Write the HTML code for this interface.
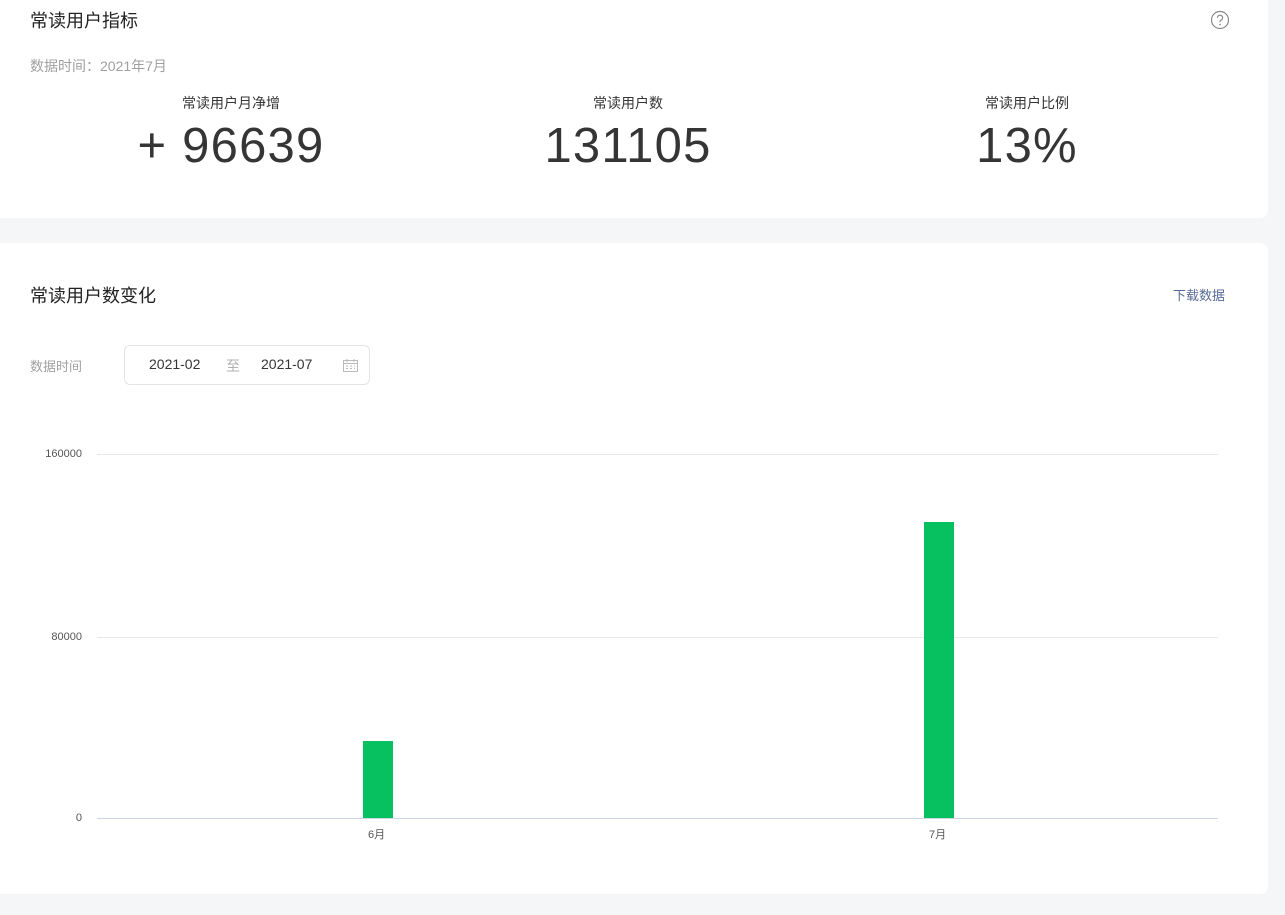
<!DOCTYPE html>
<html><head><meta charset="utf-8"><style>
*{margin:0;padding:0;box-sizing:border-box}
body{width:1285px;height:915px;background:#f5f6f7;font-family:"Liberation Sans","Noto Sans CJK SC",sans-serif;position:relative;overflow:hidden;color:#353535}
.card{position:absolute;left:0;width:1268px;background:#fff;border-radius:0 8px 8px 0}
.abs{position:absolute;white-space:nowrap}
.t{font-size:18px;color:#222}
.lbl{font-size:14px;color:#353535;text-align:center;width:300px}
.num{font-size:49px;color:#353535;text-align:center;width:300px;line-height:48px;letter-spacing:1.2px}
.g{position:absolute;left:97px;width:1121px;height:1px;background:#e7e8ec}
.yl{position:absolute;font-size:11px;color:#555;right:1203px;text-align:right}
</style></head><body>
<div class="card" style="top:-8px;height:226px">
  <div class="abs t" style="left:30px;top:15px">常读用户指标</div>
  <svg class="abs" style="left:1210px;top:18px" width="20" height="20" viewBox="0 0 20 20"><circle cx="10" cy="10" r="8.5" fill="none" stroke="#888" stroke-width="1.2"/><path d="M7.4 7.8a2.6 2.6 0 1 1 3.6 2.4c-.7.3-1 .8-1 1.5v.6" fill="none" stroke="#888" stroke-width="1.2"/><circle cx="10" cy="14.6" r=".8" fill="#888"/></svg>
  <div class="abs" style="left:30px;top:64px;font-size:14px;color:#a0a0a0">数据时间：2021年7月</div>
  <div class="abs lbl" style="left:81px;top:101px">常读用户月净增</div>
  <div class="abs num" style="left:81px;top:130px">+ 96639</div>
  <div class="abs lbl" style="left:478px;top:101px">常读用户数</div>
  <div class="abs num" style="left:478px;top:130px">131105</div>
  <div class="abs lbl" style="left:877px;top:101px">常读用户比例</div>
  <div class="abs num" style="left:877px;top:130px">13%</div>
</div>
<div class="card" style="top:243px;height:651px">
  <div class="abs t" style="left:30px;top:39px">常读用户数变化</div>
  <div class="abs" style="left:1173px;top:42px;font-size:13px;color:#576b95">下载数据</div>
  <div class="abs" style="left:30px;top:113px;font-size:13px;color:#a0a0a0">数据时间</div>
  <div class="abs" style="left:124px;top:102px;width:246px;height:40px;border:1px solid #e4e4e6;border-radius:6px"></div>
  <div class="abs" style="left:149px;top:113px;font-size:14px;color:#353535">2021-02</div>
  <div class="abs" style="left:226px;top:113px;font-size:14px;color:#b0b0b0">至</div>
  <div class="abs" style="left:261px;top:113px;font-size:14px;color:#353535">2021-07</div>
  <svg class="abs" style="left:343px;top:116px" width="15" height="13" viewBox="0 0 15 13"><rect x=".5" y="1.5" width="14" height="11" fill="none" stroke="#bbb"/><line x1=".5" y1="4.5" x2="14.5" y2="4.5" stroke="#bbb"/><path d="M4 0v3M11 0v3" stroke="#bbb"/><path d="M3 7h2M7 7h2M11 7h1M3 9.5h2M7 9.5h2M11 9.5h1" stroke="#bbb"/></svg>
</div>
<div class="g" style="top:454px"></div>
<div class="g" style="top:637px"></div>
<div class="g" style="top:818px;background:#cfd6e3"></div>
<div class="yl" style="top:448px">160000</div>
<div class="yl" style="top:631px">80000</div>
<div class="yl" style="top:812px">0</div>
<div class="abs" style="left:363px;top:741px;width:30px;height:77px;background:#07c160"></div>
<div class="abs" style="left:924px;top:522px;width:30px;height:296px;background:#07c160"></div>
<div class="abs" style="left:368px;top:826px;font-size:11px;color:#555">6月</div>
<div class="abs" style="left:929px;top:826px;font-size:11px;color:#555">7月</div>
</body></html>
